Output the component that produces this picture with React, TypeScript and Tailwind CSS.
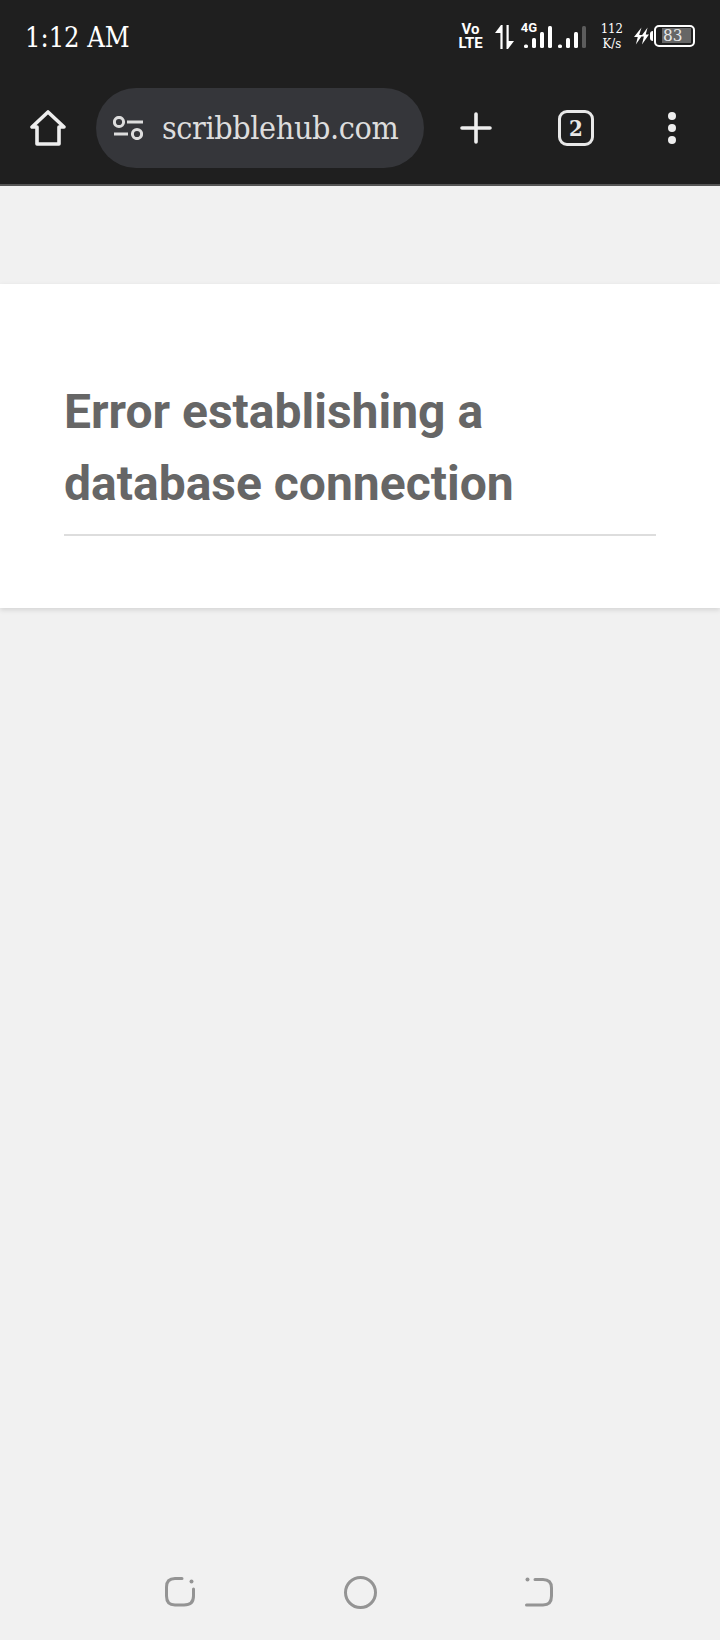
import React from "react";

const serif = "font-['DejaVu_Serif','Liberation_Serif',serif] font-stretch-condensed";

const HomeIcon = () => (
  <svg width="36" height="36" viewBox="0 0 36 36" fill="none" stroke="#eeeeee" strokeWidth="3.6" strokeLinejoin="round" strokeLinecap="round">
    <path d="M7 34H29V17H34L18 2 2 17H7Z" />
  </svg>
);

const FilterIcon = () => (
  <svg width="30" height="24" viewBox="0 0 30 24" fill="none" stroke="#dddddd" strokeWidth="3">
    <circle cx="6" cy="6" r="4.6" />
    <path d="M14 6H30M1 18H15" />
    <circle cx="24" cy="18" r="4.6" />
  </svg>
);

const SignalIcon = ({ dimLast }: { dimLast?: boolean }) => (
  <svg width="28" height="22" viewBox="0 0 28 22" fill="#ffffff">
    <rect x="0" y="18.5" width="4" height="3.5" rx="1.5" />
    <rect x="8" y="12" width="4" height="10" rx="1.5" />
    <rect x="16" y="6" width="4" height="16" rx="1.5" />
    <rect x="24" y="0" width="4" height="22" rx="1.5" fill={dimLast ? "#5c5c5c" : "#ffffff"} />
  </svg>
);

const ArrowsIcon = () => (
  <svg className="mb-[-1px]" width="19" height="24" viewBox="0 0 19 24" fill="#ffffff">
    <path d="M0 8L6 0H7.6V24H5.4V8Z" />
    <path d="M11.5 0H13.7V16H19L13 24H11.5Z" />
  </svg>
);

const BoltIcon = () => (
  <svg width="15" height="18" viewBox="0 0 16 18" fill="#ffffff">
    <path d="M8 0L0 10H4L2 18 9 8H5.5ZM14.5 0L7.5 9.5H10.5L8.5 18 16 7.5H12.5Z" />
  </svg>
);

const RecentIcon = () => (
  <svg width="30" height="30" viewBox="0 0 30 30" fill="none" stroke="#949494" strokeWidth="3" strokeLinecap="round">
    <path d="M17 1.5H10C4.5 1.5 1.5 4.5 1.5 10V19C1.5 25 4.5 28 10 28H19C25 28 28.5 25 28.5 19V12" />
    <circle cx="26.5" cy="4.5" r="2" fill="#949494" stroke="none" />
  </svg>
);

const BackIcon = () => (
  <svg width="28" height="30" viewBox="0 0 28 30" fill="none" stroke="#949494" strokeWidth="3" strokeLinecap="round">
    <path d="M10 2.5H18C24 2.5 26.5 5.5 26.5 11V19C26.5 25 24 28 18 28H1.5" />
    <circle cx="2.5" cy="2.5" r="2" fill="#949494" stroke="none" />
  </svg>
);

function StatusBar() {
  return (
    <div className="flex items-center justify-between h-[72px] pl-[25px] pr-[25px] text-white">
      <span className={`${serif} text-[27px] leading-none pt-[2px]`}>1:12 AM</span>
      <div className="flex items-end mb-[4px]">
        <div className="flex flex-col items-center mb-[-2px] font-['Roboto',sans-serif] font-bold leading-none">
          <span className="text-[15px] leading-[14px]">Vo</span>
          <span className="text-[15px] leading-[14px]">LTE</span>
        </div>
        <div className="flex items-end gap-[10px] ml-[12px]">
          <ArrowsIcon />
          <div className="relative flex items-end gap-[6px]">
            <span className="absolute left-[-3px] top-[-5px] font-['Roboto',sans-serif] font-bold text-[13px] leading-none">4G</span>
            <SignalIcon />
            <SignalIcon dimLast />
          </div>
        </div>
        <div className={`${serif} flex flex-col items-center ml-[15px] text-[13px] leading-[15px] mb-[-3px]`}>
          <span>112</span>
          <span>K/s</span>
        </div>
        <div className="flex items-center ml-[11px] mb-[1px]">
          <BoltIcon />
          <div className="w-[3px] h-[10px] ml-[1px] bg-white rounded-l-sm" />
          <div className="flex items-center justify-end w-[41px] h-[22px] ml-[1px] border-2 border-white rounded-[5px] pr-[2px]">
            <span className={`${serif} flex items-center w-[29px] h-[15px] pl-[1px] bg-[#666666] text-[#e8e8e8] text-[17px] leading-none`}>83</span>
          </div>
        </div>
      </div>
    </div>
  );
}

function Toolbar() {
  return (
    <div className="flex items-center h-[112px] pl-[30px]">
      <HomeIcon />
      <div className="flex items-center gap-[19px] w-[328px] h-[80px] ml-[30px] pl-[17px] rounded-full bg-[#35363a]">
        <FilterIcon />
        <span className={`${serif} text-[#dddddd] text-[32px] leading-none tracking-[-0.4px]`}>scribblehub.com</span>
      </div>
      <svg className="ml-[36px]" width="32" height="32" viewBox="0 0 32 32" stroke="#eeeeee" strokeWidth="3.6" strokeLinecap="round">
        <path d="M16 2V30M2 16H30" />
      </svg>
      <div className={`${serif} font-bold flex items-center justify-center w-[36px] h-[36px] ml-[66px] border-[3px] border-[#e8e8e8] rounded-[9px] text-[#e8e8e8] text-[22px] leading-none`}>2</div>
      <div className="flex flex-col gap-[4px] ml-[74px]">
        <div className="w-[8px] h-[8px] rounded-full bg-[#eeeeee]" />
        <div className="w-[8px] h-[8px] rounded-full bg-[#eeeeee]" />
        <div className="w-[8px] h-[8px] rounded-full bg-[#eeeeee]" />
      </div>
    </div>
  );
}

export default function App() {
  return (
    <div className="flex flex-col h-[1640px] bg-[#f1f1f1]">
      <header className="bg-[#1f1f1f] border-b-2 border-[#555555]">
        <StatusBar />
        <Toolbar />
      </header>

      <main className="flex-1 pt-[98px]">
        <div className="h-[324px] bg-white px-[64px] pt-[92px] shadow-[0_2px_5px_rgba(0,0,0,0.12)]">
          <h1 className="font-['Roboto',sans-serif] font-bold text-[48px] leading-[72px] text-[#666666] pb-[14px] border-b-2 border-[#dddddd]">
            Error establishing a database connection
          </h1>
        </div>
      </main>

      <nav className="flex items-center justify-between h-[96px] pl-[165px] pr-[167px]">
        <RecentIcon />
        <div className="w-[33px] h-[33px] rounded-full border-[3px] border-[#949494]" />
        <BackIcon />
      </nav>
    </div>
  );
}
